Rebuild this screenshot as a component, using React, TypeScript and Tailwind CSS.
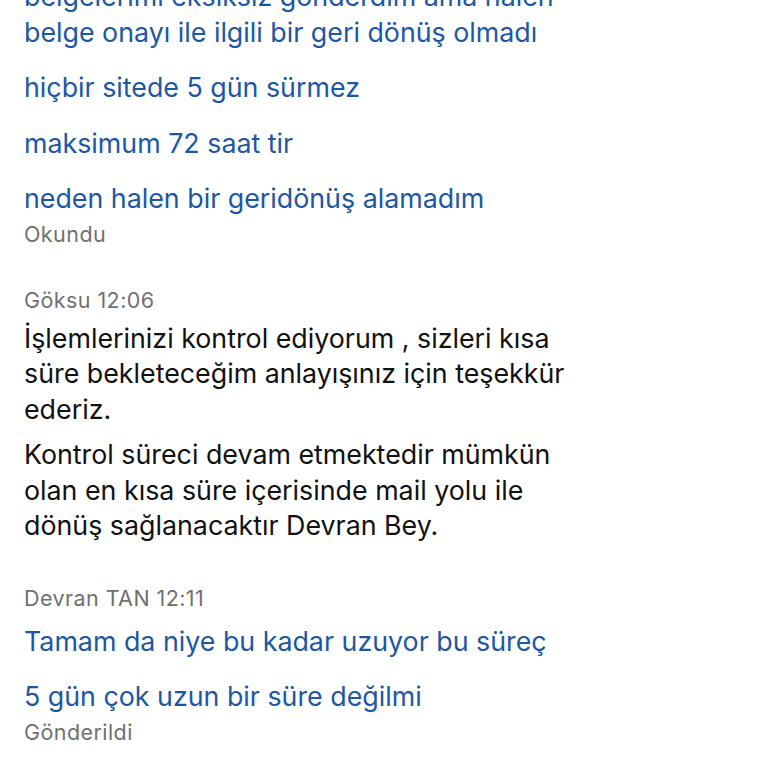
const groups = [
    {
        header: null as string | null,
        sent: true,
        messages: [
            'belgelerimi eksiksiz gönderdim ama halen belge onayı ile ilgili bir geri dönüş olmadı',
            'hiçbir sitede 5 gün sürmez',
            'maksimum 72 saat tir',
            'neden halen bir geridönüş alamadım',
        ],
        footer: 'Okundu' as string | null,
    },
    {
        header: 'Göksu 12:06',
        sent: false,
        messages: [
            'İşlemlerinizi kontrol ediyorum , sizleri kısa süre bekleteceğim anlayışınız için teşekkür ederiz.',
            'Kontrol süreci devam etmektedir mümkün olan en kısa süre içerisinde mail yolu ile dönüş sağlanacaktır Devran Bey.',
        ],
        footer: null,
    },
    {
        header: 'Devran TAN 12:11',
        sent: true,
        messages: ['Tamam da niye bu kadar uzuyor bu süreç', '5 gün çok uzun bir süre değilmi'],
        footer: 'Gönderildi',
    },
];

const App = () => {
    return (
        <div
            className="h-[768px] w-[768px] overflow-hidden bg-white"
            style={{ fontFamily: 'Inter, "Noto Sans", sans-serif' }}
        >
            <div className="-mt-[26px] flex flex-col gap-[42px] px-6">
                {groups.map((group, gi) => (
                    <div key={gi} className="flex flex-col">
                        {group.header && (
                            <p className="mb-[9px] text-[21.5px] leading-[24px] tracking-[0.02em] text-[#707070]">
                                {group.header}
                            </p>
                        )}
                        <div className="flex flex-col gap-[10px]">
                            {group.messages.map((msg, mi) => (
                                <p
                                    key={mi}
                                    className={
                                        group.sent
                                            ? 'max-w-[545px] py-[5px] text-[26.8px] leading-[35.5px] text-[#1c57a5]'
                                            : 'max-w-[545px] text-[26.8px] leading-[35.5px] text-[#111111]'
                                    }
                                >
                                    {msg}
                                </p>
                            ))}
                        </div>
                        {group.footer && (
                            <p className="text-[21.5px] leading-[24px] tracking-[0.02em] text-[#707070]">
                                {group.footer}
                            </p>
                        )}
                    </div>
                ))}
            </div>
        </div>
    );
};

export default App;
